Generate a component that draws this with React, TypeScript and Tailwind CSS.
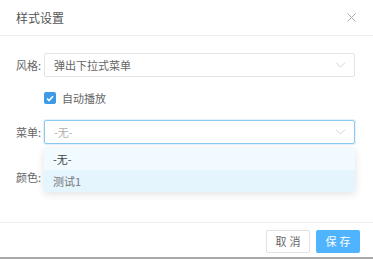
import { useState } from 'react';

const font = { fontFamily: '"Noto Sans CJK SC", "Noto Sans", sans-serif' };

function Chevron() {
  return (
    <svg width="11" height="6" viewBox="0 0 11 6" fill="none" stroke="#cfd2d8" strokeWidth="1" aria-hidden="true">
      <path d="M1 0.6l4.5 4.5 4.5-4.5" />
    </svg>
  );
}

export default function App() {
  const [autoPlay, setAutoPlay] = useState(true);
  const opzioni = ['-无-', '测试1'];

  return (
    <div className="flex h-[260px] w-[373px] flex-col bg-white text-[11px] text-[#666]" style={font}>
      <div className="flex h-[36px] shrink-0 items-center justify-between border-b border-[#eeeeee] pl-4 pr-[17px]">
        <span className="text-[12px] text-[#555]">样式设置</span>
        <svg width="9" height="9" viewBox="0 0 9 9" stroke="#a8a8a8" strokeWidth="1" aria-hidden="true">
          <path d="M0.5 0.5l8 8M8.5 0.5l-8 8" />
        </svg>
      </div>

      <div className="flex h-[186px] shrink-0 flex-col pl-4 pr-[18px]">
        <div className="mt-[17px] flex h-6 items-center">
          <span className="w-[28px] shrink-0">风格:</span>
          <div className="flex h-full flex-1 items-center justify-between rounded-[2px] border border-[#e4e4e4] pl-[9px] pr-[8px]">
            <span>弹出下拉式菜单</span>
            <Chevron />
          </div>
        </div>

        <div className="ml-[28px] mt-[15px] flex h-[12px] items-center gap-[6px]">
          <button
            type="button"
            onClick={() => setAutoPlay((v) => !v)}
            className={`flex h-[12px] w-[12px] items-center justify-center rounded-[2px] ${autoPlay ? 'bg-[#3d9ae8]' : 'border border-[#ccc] bg-white'}`}
          >
            {autoPlay && (
              <svg width="8" height="7" viewBox="0 0 8 7" fill="none" stroke="white" strokeWidth="1.6" aria-hidden="true">
                <path d="M1 3.5l2 2 4-4.2" />
              </svg>
            )}
          </button>
          <span>自动播放</span>
        </div>

        <div className="relative mt-[16px] flex h-6 items-center">
          <span className="w-[28px] shrink-0">菜单:</span>
          <div className="flex h-full flex-1 items-center justify-between rounded-[2px] border border-[#8cc8f2] pl-[9px] pr-[8px] shadow-[0_0_0_1px_rgba(140,200,242,0.25)]">
            <span className="text-[#b0b0b0]">-无-</span>
            <Chevron />
          </div>
          <ul className="absolute left-[28px] right-0 top-[28px] z-10 rounded-[2px] bg-white shadow-[0_2px_8px_rgba(0,0,0,0.12)]">
            {opzioni.map((o, i) => (
              <li
                key={o}
                className={`flex h-[22px] items-center pl-[9px] ${i === 0 ? 'bg-[#f0faff] text-[#444]' : 'bg-[#e4f5fe] text-[#777]'}`}
              >
                {o}
              </li>
            ))}
          </ul>
        </div>

        <div className="mt-[21px] flex h-6 items-center">
          <span className="w-[28px] shrink-0">颜色:</span>
        </div>
      </div>

      <div className="flex h-[37px] shrink-0 items-start justify-end gap-[6px] border-t border-b-2 border-t-[#eeeeee] border-b-[#a8a8a8] pr-[13px] pt-[7px]">
        <button
          type="button"
          className="h-[23px] w-[44px] rounded-[2px] border border-[#e2e2e2] bg-white pl-[3px] text-[11px] tracking-[3px] text-[#666]"
        >
          取消
        </button>
        <button
          type="button"
          className="h-[23px] w-[44px] rounded-[2px] bg-[#4fb4fd] pl-[3px] text-[11px] tracking-[3px] text-white"
        >
          保存
        </button>
      </div>
    </div>
  );
}
